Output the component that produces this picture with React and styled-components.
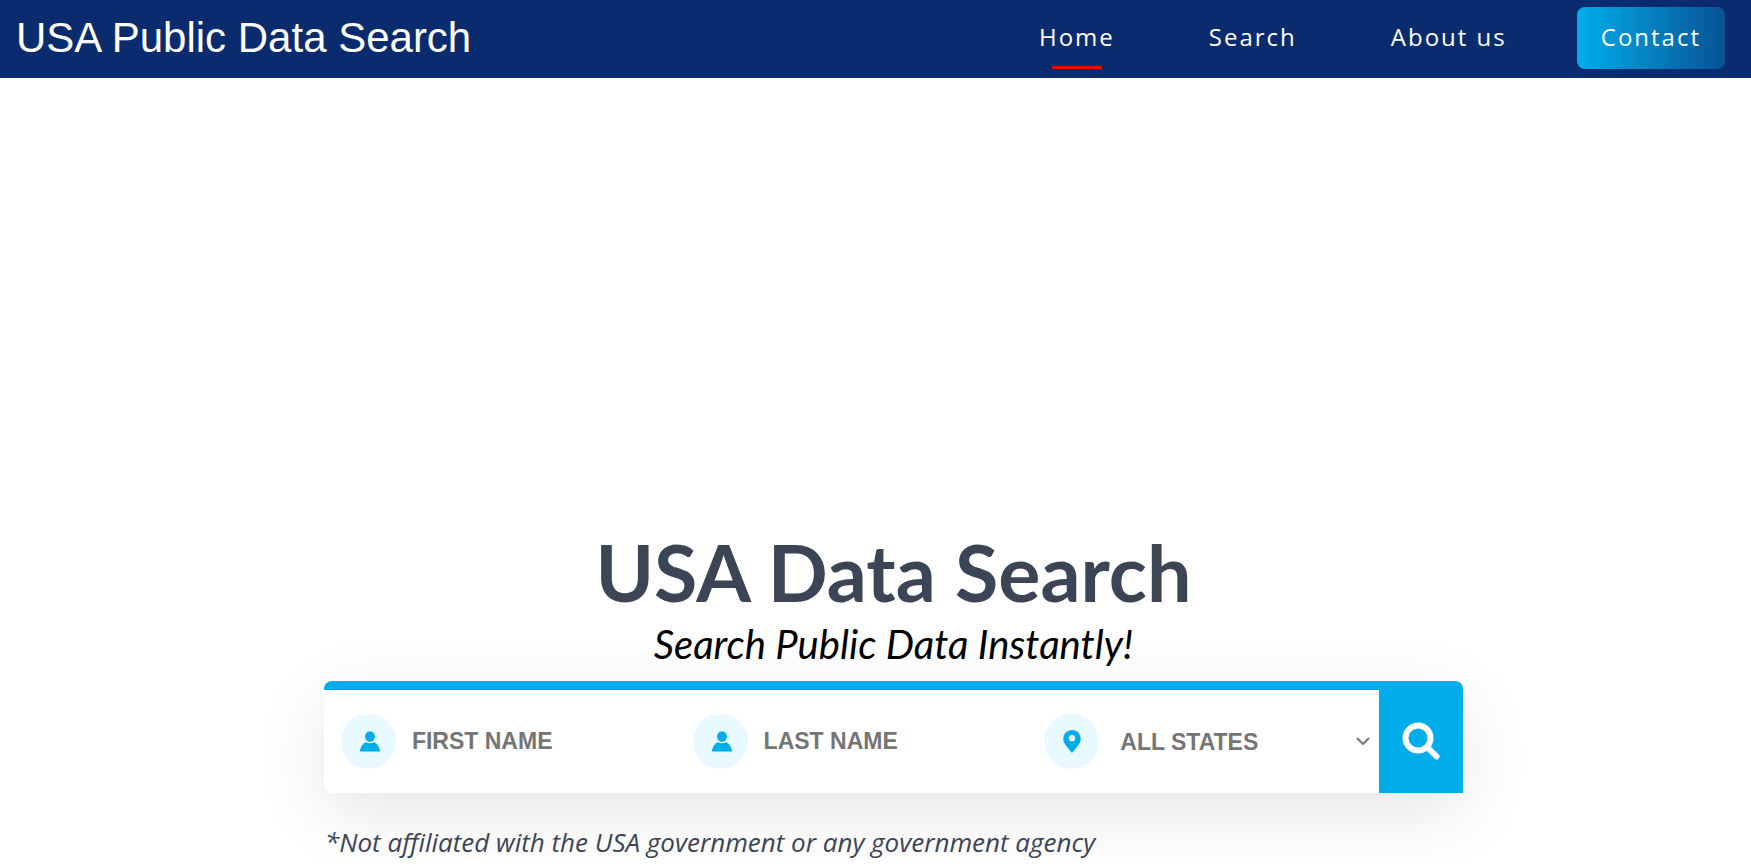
import React from "react";
import styled, { createGlobalStyle } from "styled-components";

const BLUE = "#00adeb";

const GlobalStyle = createGlobalStyle`
  *, *::before, *::after { box-sizing: border-box; }
  body {
    margin: 0;
    background: #fff;
    font-family: "Open Sans", sans-serif;
  }
`;

const Header = styled.header`
  display: flex;
  align-items: center;
  justify-content: space-between;
  min-height: 78px;
  padding: 0 26px 2px 16px;
  background: #0a2c6e;
`;

const Brand = styled.a`
  color: #fff;
  font-family: "Liberation Sans", Arial, sans-serif;
  font-size: 42px;
  line-height: 48px;
  text-decoration: none;
  white-space: nowrap;
`;

const Nav = styled.nav`
  display: flex;
  align-items: center;
  gap: 46px;
`;

const NavLink = styled.a`
  display: flex;
  flex-direction: column;
  align-items: center;
  justify-content: center;
  position: relative;
  height: 62px;
  padding: 0 24px 2px;
  border-radius: 8px;
  color: #fff;
  font-size: 24px;
  line-height: 34px;
  letter-spacing: 2px;
  text-decoration: none;
  white-space: nowrap;
  background: ${(p) => (p.$filled ? `linear-gradient(to right, ${BLUE}, #085394)` : "none")};

  &::after {
    content: "";
    display: ${(p) => (p.$active ? "block" : "none")};
    position: absolute;
    bottom: 0;
    width: 50px;
    height: 3px;
    background: #f00;
  }
`;

const Hero = styled.main`
  width: 65.05%;
  margin-left: 18.5%;
  padding-top: 446px;
`;

const Title = styled.h1`
  margin: 0;
  color: #3c4556;
  font: 700 79px/96px Lato, sans-serif;
  text-align: center;
`;

const Subtitle = styled.p`
  margin: 0 0 13px;
  color: #000;
  font: italic 400 40px/48px Lato, sans-serif;
  text-align: center;
`;

const SearchForm = styled.form`
  display: flex;
  height: 112px;
  border-radius: 8px 8px 0 8px;
  background: #fff;
  box-shadow: 0 20px 70px rgba(0, 0, 0, 0.1);
`;

const Fields = styled.div`
  display: grid;
  grid-template-columns: repeat(3, 1fr);
  flex: 1;
  min-width: 0;
  border-top: 9px solid ${BLUE};
  border-top-left-radius: 8px;
`;

const Field = styled.label`
  display: flex;
  align-items: center;
  gap: 16px;
  min-width: 0;
  padding: 0 9px 0 17px;
`;

const IconCircle = styled.span`
  display: flex;
  flex: none;
  align-items: center;
  justify-content: center;
  width: 55px;
  height: 55px;
  padding-left: ${(p) => p.$inset || 0}px;
  border-radius: 50%;
  background: #e8faff;
`;

const controlText = `
  flex: 1;
  min-width: 0;
  width: 100%;
  height: 56px;
  border: 0;
  outline: 0;
  background: transparent;
  color: #757575;
  font: 700 23px/28px "Liberation Sans", Arial, sans-serif;
`;

const TextInput = styled.input`
  ${controlText}
  padding: 0;
  &::placeholder { color: #757575; opacity: 1; }
`;

const StateSelect = styled.select`
  ${controlText}
  appearance: none;
  padding: 0 0 0 5px;
`;

const SubmitButton = styled.button`
  display: flex;
  align-items: center;
  justify-content: center;
  width: 84px;
  padding: 8px 0 0;
  border: 0;
  border-radius: 0 8px 0 0;
  background: ${BLUE};
  cursor: pointer;
`;

const Disclaimer = styled.p`
  margin: 32px 0 0;
  padding-left: 1px;
  color: #3c4556;
  font-size: 26px;
  font-style: italic;
  line-height: 34px;
`;

const PersonIcon = () => (
  <svg width="20" height="21" viewBox="0 0 20 21" fill={BLUE} aria-hidden="true">
    <ellipse cx="10" cy="5.6" rx="4.9" ry="5.3" />
    <path d="M0 20.5V19C1 15.500 3 12.200 5.500 11.200c2.500 1.500 6.500 1.500 9 0C17 12.200 19 15.500 20 19v1.500z" />
  </svg>
);

const PinIcon = () => (
  <svg width="18" height="23" viewBox="0 0 18 23" aria-hidden="true">
    <path fill={BLUE} fillRule="evenodd" d="M9 0a8.800 8.800 0 0 0-8.800 8.800C.2 14 5.500 18.500 9 23c3.500-4.500 8.800-9 8.800-14.200A8.800 8.800 0 0 0 9 0zm0 5a3.200 3.200 0 1 1 0 6.400A3.200 3.200 0 0 1 9 5z" />
  </svg>
);

const ChevronIcon = () => (
  <svg width="14" height="9" viewBox="0 0 14 9" fill="none" stroke="#757575" strokeWidth="2" strokeLinecap="round" strokeLinejoin="round" aria-hidden="true">
    <path d="M1.500 1.500 7 7l5.500-5.500" />
  </svg>
);

const SearchIcon = () => (
  <svg width="38" height="38" viewBox="0 0 38 38" fill="none" stroke="#fff" strokeWidth="6" aria-hidden="true">
    <circle cx="16" cy="16" r="12.500" />
    <path d="m25.500 25.500 9 9" strokeLinecap="round" />
  </svg>
);

export default function App() {
  return (
    <>
      <GlobalStyle />
      <Header>
        <Brand href="#">USA Public Data Search</Brand>
        <Nav aria-label="Main">
          <NavLink href="#" $active aria-current="page">Home</NavLink>
          <NavLink href="#search">Search</NavLink>
          <NavLink href="#about">About us</NavLink>
          <NavLink href="#contact" $filled>Contact</NavLink>
        </Nav>
      </Header>
      <Hero>
        <Title>USA Data Search</Title>
        <Subtitle>Search Public Data Instantly!</Subtitle>
        <SearchForm id="search" onSubmit={(e) => e.preventDefault()}>
          <Fields>
            <Field>
              <IconCircle $inset={4}><PersonIcon /></IconCircle>
              <TextInput name="first" placeholder="FIRST NAME" aria-label="First name" />
            </Field>
            <Field>
              <IconCircle $inset={4}><PersonIcon /></IconCircle>
              <TextInput name="last" placeholder="LAST NAME" aria-label="Last name" />
            </Field>
            <Field>
              <IconCircle><PinIcon /></IconCircle>
              <StateSelect name="state" aria-label="State">
                <option>ALL STATES</option>
              </StateSelect>
              <ChevronIcon />
            </Field>
          </Fields>
          <SubmitButton type="submit" aria-label="Search"><SearchIcon /></SubmitButton>
        </SearchForm>
        <Disclaimer>*Not affiliated with the USA government or any government agency</Disclaimer>
      </Hero>
    </>
  );
}
